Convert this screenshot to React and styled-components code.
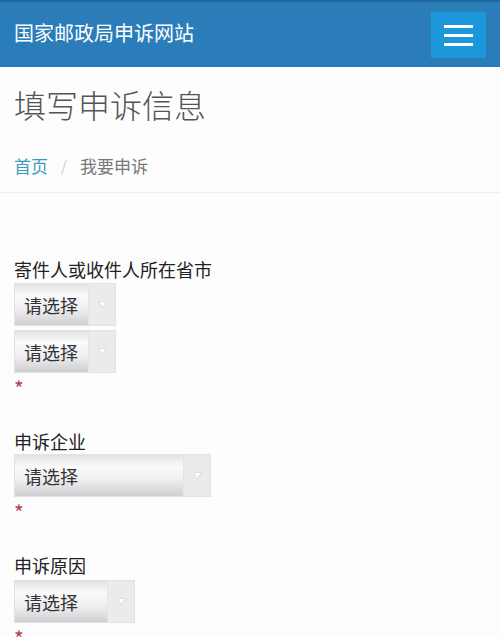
import React from "react";
import styled, { createGlobalStyle } from "styled-components";

const Global = createGlobalStyle`
  html, body {
    margin: 0;
    padding: 0;
    background: #fdfdfe;
  }
  body {
    font-family: "Noto Sans CJK SC", "Noto Sans", sans-serif;
    color: #222;
  }
`;

const Page = styled.div`
  width: 500px;
  min-height: 637px;
  overflow: hidden;
`;

const NavBar = styled.header`
  height: 65px;
  border-top: 2px solid #1f68a0;
  background: #2b7dba;
  display: flex;
  align-items: center;
  justify-content: space-between;
  padding: 0 14px;
`;

const Brand = styled.div`
  color: #fff;
  font-size: 20px;
  line-height: 28px;
  margin-top: -3px;
`;

const MenuButton = styled.button`
  width: 55px;
  height: 46px;
  border: none;
  background: #1b97da;
  display: flex;
  flex-direction: column;
  align-items: center;
  justify-content: center;
  gap: 6px;
  padding: 0;
  margin-top: 1px;
`;

const MenuLine = styled.span`
  display: block;
  width: 29px;
  height: 3px;
  background: #fff;
`;

const Heading = styled.div`
  padding: 0 14px 14px;
  border-bottom: 1px solid #eeeef0;
`;

const Title = styled.h1`
  margin: 18px 0 0;
  font-size: 32px;
  line-height: 38px;
  font-weight: 300;
  color: #555;
`;

const Crumbs = styled.nav`
  margin-top: 31px;
  display: flex;
  align-items: center;
  font-size: 17px;
  line-height: 24px;
`;

const CrumbLink = styled.a`
  color: #3a9db8;
  text-decoration: none;
`;

const CrumbSep = styled.span`
  color: #ccc;
  margin: 0 13px 0 13px;
  font-size: 15px;
`;

const CrumbCurrent = styled.span`
  color: #777;
`;

const Form = styled.form`
  padding: 64px 14px 0;
  display: flex;
  flex-direction: column;
  gap: 30px;
`;

const Field = styled.div`
  display: flex;
  flex-direction: column;
  align-items: flex-start;
`;

const Label = styled.label`
  font-size: 18px;
  line-height: 24px;
  color: #222;
  margin-bottom: ${(p) => p.$gap}px;
`;

const SelectStack = styled.div`
  display: flex;
  flex-direction: column;
  gap: 4px;
`;

const SelectBox = styled.div`
  width: ${(p) => p.$width}px;
  height: 43px;
  box-sizing: border-box;
  border: 1px solid #e2e2e4;
  display: flex;
`;

const SelectValue = styled.div`
  flex: 1;
  padding-left: 9px;
  display: flex;
  align-items: center;
  font-size: 18px;
  color: #333;
  background: linear-gradient(
    to bottom,
    #e2e2e4 0%,
    #fafafb 28%,
    #eeeef0 62%,
    #cfcfd2 100%
  );
`;

const SelectArrow = styled.div`
  width: 26px;
  display: flex;
  align-items: center;
  justify-content: center;
  background: #ebebed;
  border-left: 1px solid #e4e4e6;
`;

const Required = styled.span`
  color: #b5404c;
  font-size: 21px;
  line-height: 22px;
  height: 22px;
  padding-top: 4px;
`;

function Select({ width }) {
  return (
    <SelectBox $width={width}>
      <SelectValue>请选择</SelectValue>
      <SelectArrow>
        <svg width="9" height="7" viewBox="0 0 9 7">
          <path d="M0.5 0.5 L8.5 0.5 L4.5 6.5 Z" fill="#fff" stroke="#d6d6d8" strokeWidth="0.8" />
        </svg>
      </SelectArrow>
    </SelectBox>
  );
}

export default function App() {
  return (
    <Page>
      <Global />
      <NavBar>
        <Brand>国家邮政局申诉网站</Brand>
        <MenuButton type="button" aria-label="菜单">
          <MenuLine />
          <MenuLine />
          <MenuLine />
        </MenuButton>
      </NavBar>
      <Heading>
        <Title>填写申诉信息</Title>
        <Crumbs>
          <CrumbLink href="#">首页</CrumbLink>
          <CrumbSep>/</CrumbSep>
          <CrumbCurrent>我要申诉</CrumbCurrent>
        </Crumbs>
      </Heading>
      <Form>
        <Field>
          <Label $gap={2}>寄件人或收件人所在省市</Label>
          <SelectStack>
            <Select width={102} />
            <Select width={102} />
          </SelectStack>
          <Required>*</Required>
        </Field>
        <Field>
          <Label $gap={1}>申诉企业</Label>
          <Select width={197} />
          <Required>*</Required>
        </Field>
        <Field>
          <Label $gap={3}>申诉原因</Label>
          <Select width={121} />
          <Required>*</Required>
        </Field>
      </Form>
    </Page>
  );
}
